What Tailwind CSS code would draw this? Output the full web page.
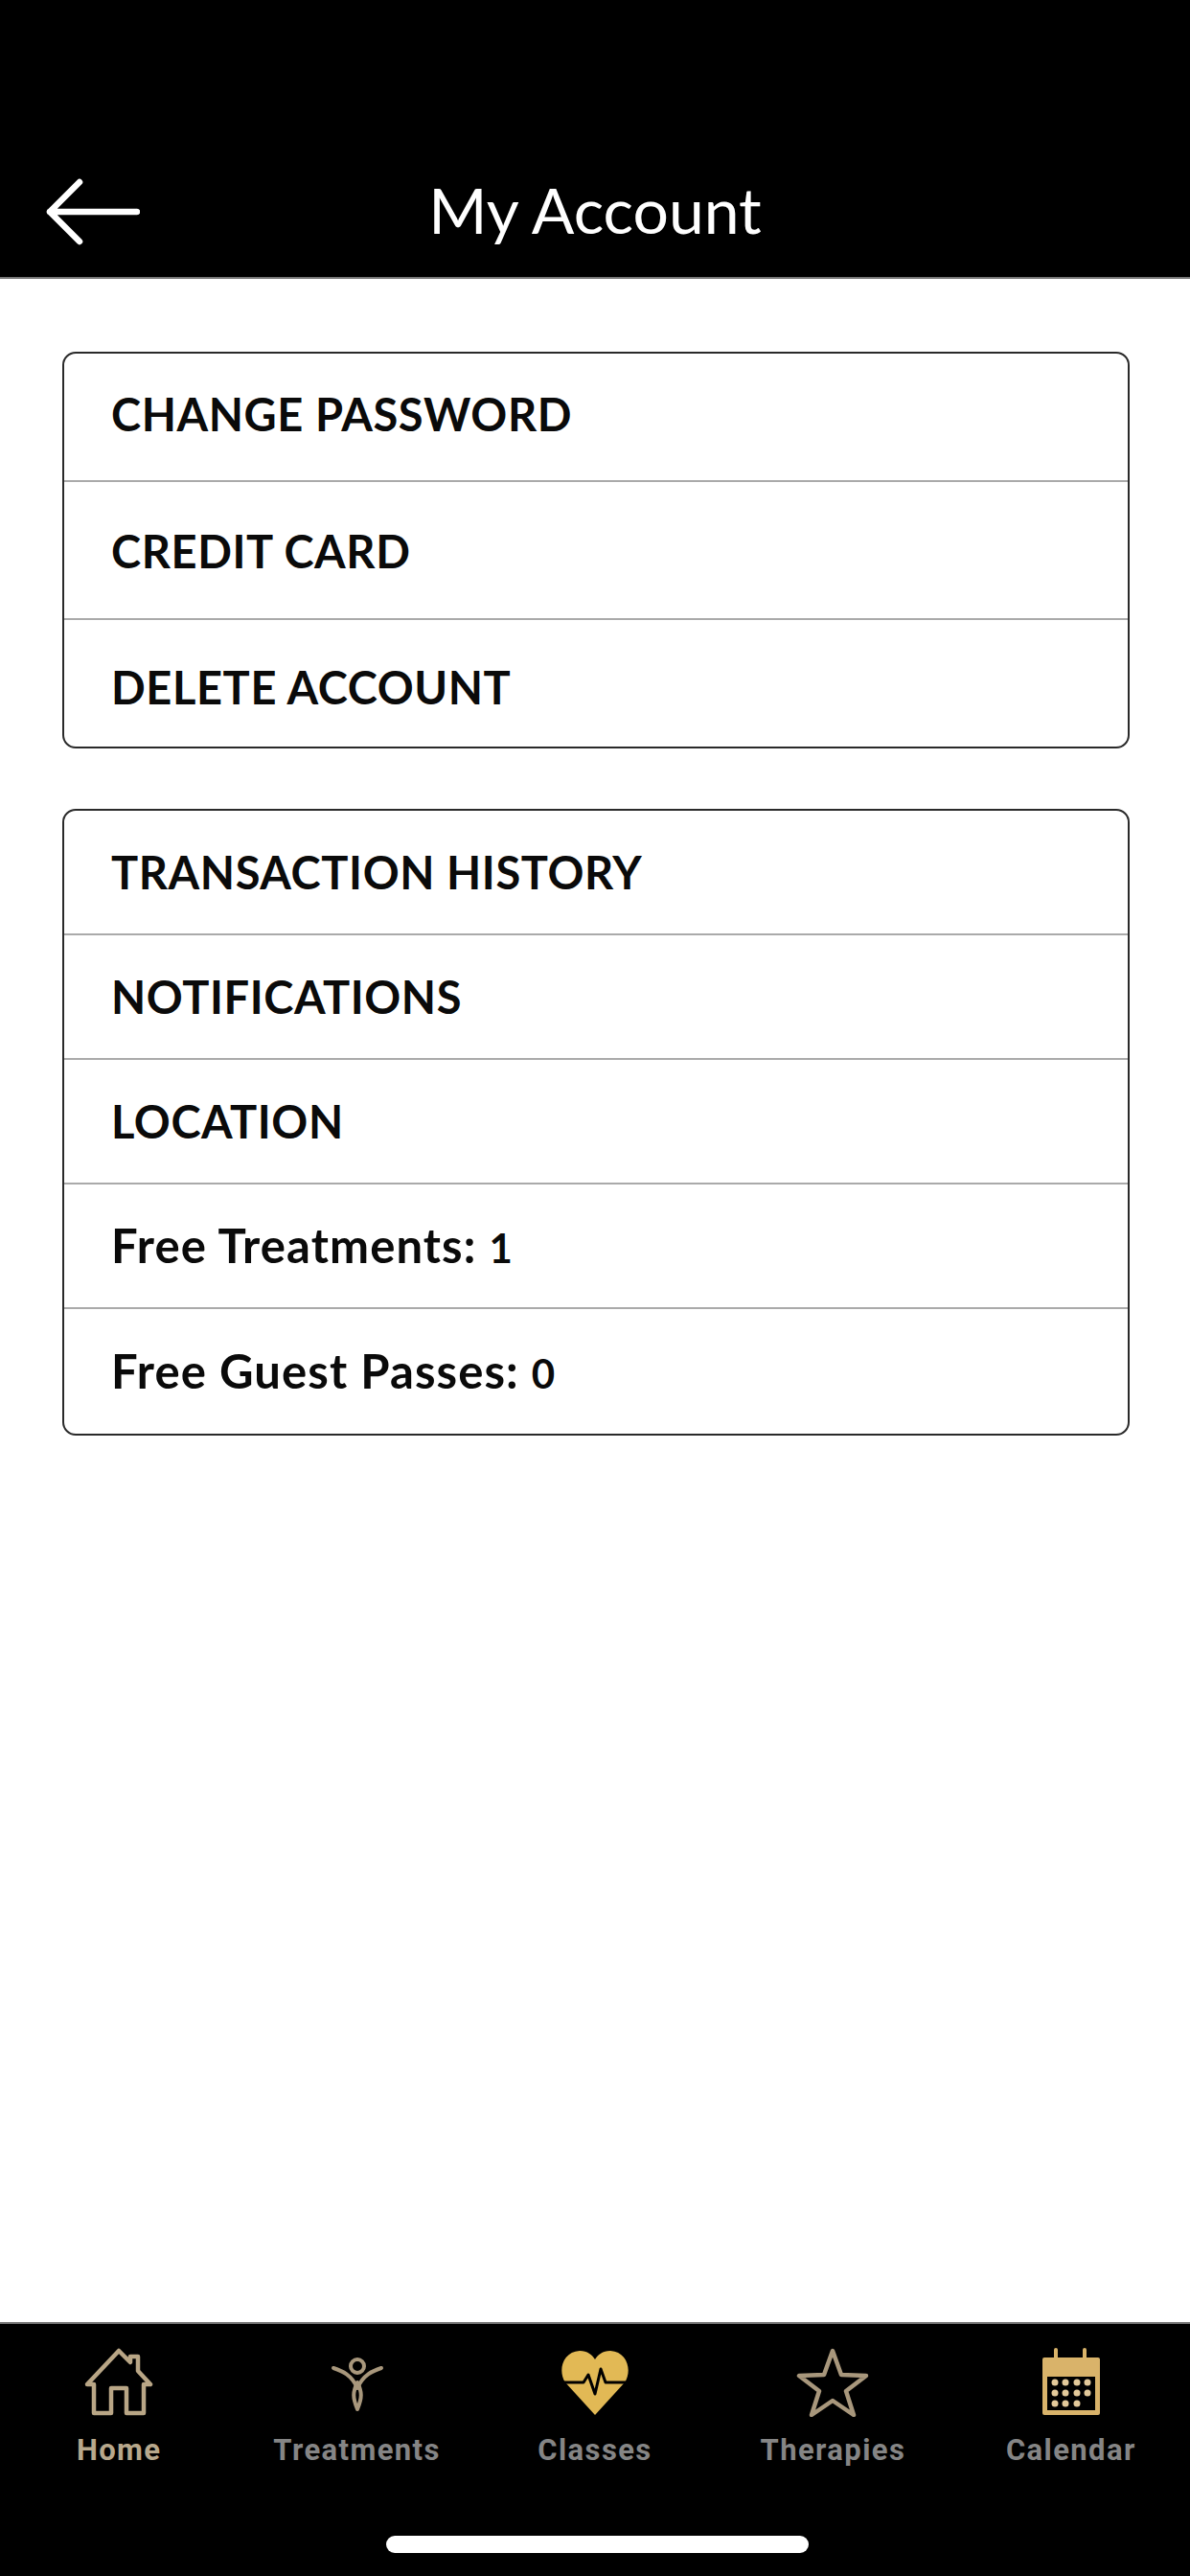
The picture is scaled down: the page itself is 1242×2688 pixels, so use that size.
<!DOCTYPE html>
<html lang="en">
<head>
  <meta charset="UTF-8" />
  <title>My Account</title>
  <script src="https://cdn.jsdelivr.net/npm/@tailwindcss/browser@4"></script>
</head>
<body class="bg-white font-['Lato','Liberation_Sans',sans-serif]">
  <div class="w-[1242px] h-[2688px] flex flex-col overflow-hidden">
    <!-- Header -->
    <header class="h-[291px] bg-black border-b-2 border-[#777] flex items-end pb-[30px] relative shrink-0">
      <svg class="absolute left-[48px] top-[186px] w-[98px] h-[70px]" viewBox="0 0 98 70" fill="none" stroke="#fff" stroke-width="6.5" stroke-linecap="round" stroke-linejoin="round">
        <path d="M35 4 L4 35 L35 66 M4 35 H95"/>
      </svg>
      <h1 class="w-full text-center text-white text-[66px] leading-[80px] font-normal">My Account</h1>
    </header>

    <main class="flex-1 pl-[65px] pr-[63px] pt-[76px] flex flex-col gap-[63px]">
      <!-- Account actions -->
      <div class="border-[2.5px] border-[#2a2a2a] rounded-[14px] text-[#0a0a0a] text-[47px] tracking-[0.6px] font-bold">
        <div class="h-[134px] pl-[49px] pb-[6px] flex items-center border-b-2 border-[#aaa]">CHANGE PASSWORD</div>
        <div class="h-[144px] pl-[49px] pt-[2px] flex items-center border-b-2 border-[#aaa]">CREDIT CARD</div>
        <div class="h-[132px] pl-[49px] pt-[8px] flex items-center">DELETE ACCOUNT</div>
      </div>
      <!-- Other -->
      <div class="border-[2.5px] border-[#2a2a2a] rounded-[14px] text-[#0a0a0a] text-[47px] tracking-[0.6px] font-bold">
        <div class="h-[130px] pl-[49px] flex items-center border-b-2 border-[#aaa]">TRANSACTION HISTORY</div>
        <div class="h-[130px] pl-[49px] flex items-center border-b-2 border-[#aaa]">NOTIFICATIONS</div>
        <div class="h-[130px] pl-[49px] flex items-center border-b-2 border-[#aaa]">LOCATION</div>
        <div class="h-[130px] pl-[49px] flex items-center border-b-2 border-[#aaa] text-[49px] tracking-[1.1px]"><span>Free Treatments: <span class="text-[42px]">1</span></span></div>
        <div class="h-[130px] pl-[49px] flex items-center text-[49px] tracking-[1.1px]"><span>Free Guest Passes: <span class="text-[42px]">0</span></span></div>
      </div>
    </main>

    <!-- Tab bar -->
    <nav class="h-[265px] bg-black border-t-2 border-[#777] shrink-0 relative">
      <div class="grid grid-cols-5 pt-[25px] text-[31px] leading-[36px] font-bold font-['Roboto',sans-serif] text-[#858585] tracking-[1.4px]">
        <a class="flex flex-col items-center text-[#b8a88c]">
          <svg class="w-[72px] h-[72px] mb-[17px]" viewBox="0 0 72 72" fill="none" stroke="#b9a686" stroke-width="4.5" stroke-linejoin="round" stroke-linecap="round">
            <path d="M3 38 L36 3 L48 15 V9 H56 V24 L69 38 L62 38 V68 H44 V42 H28 V68 H10 V38 Z"/>
          </svg>
          Home
        </a>
        <a class="flex flex-col items-center">
          <svg class="w-[72px] h-[72px] mb-[17px]" viewBox="0 0 72 72" fill="none" stroke="#a8977c" stroke-width="4" stroke-linecap="round" stroke-linejoin="round">
            <circle cx="36" cy="19" r="7"/>
            <path d="M11 21 C20 24 30 28 36 42 C42 28 52 24 61 21"/>
            <path d="M36 36 C31 46 31 52 36 64 C41 52 41 46 36 36 Z"/>
          </svg>
          Treatments
        </a>
        <a class="flex flex-col items-center">
          <svg class="w-[72px] h-[72px] mb-[17px]" viewBox="0 0 72 72">
            <path fill="#e2b955" d="M36 70 L5 36 C-3 24 2 4 20 3 C28 3 33 7 36 12 C39 7 44 3 52 3 C70 4 75 24 67 36 Z"/>
            <path fill="none" stroke="#000" stroke-width="3" stroke-linejoin="round" d="M2 36 H24 L29 28 L36 48 L42 22 L47 36 H70"/>
          </svg>
          Classes
        </a>
        <a class="flex flex-col items-center">
          <svg class="w-[76px] h-[72px] mb-[17px]" viewBox="0 0 76 72" fill="none" stroke="#a8977c" stroke-width="4.5" stroke-linejoin="round">
            <path d="M38 3 L47 28 L73 29 L52 45 L60 70 L38 55 L16 70 L24 45 L3 29 L29 28 Z"/>
          </svg>
          Therapies
        </a>
        <a class="flex flex-col items-center">
          <svg class="w-[64px] h-[72px] mb-[17px]" viewBox="0 0 64 72">
            <rect x="2" y="10" width="60" height="60" rx="2" fill="#d9b36a"/>
            <rect x="7" y="30" width="50" height="35" fill="#000"/>
            <path d="M16 2 V18 M46 2 V18" stroke="#d9b36a" stroke-width="4" stroke-linecap="round"/>
            <g fill="#e3c99a">
              <circle cx="15" cy="36" r="3.5"/><circle cx="26" cy="36" r="3.5"/><circle cx="38" cy="36" r="3.5"/><circle cx="49" cy="36" r="3.5"/>
              <circle cx="15" cy="47" r="3.5"/><circle cx="26" cy="47" r="3.5"/><circle cx="38" cy="47" r="3.5"/><circle cx="49" cy="47" r="3.5"/>
              <circle cx="15" cy="58" r="3.5"/><circle cx="26" cy="58" r="3.5"/><circle cx="38" cy="58" r="3.5"/>
            </g>
          </svg>
          Calendar
        </a>
      </div>
      <div class="absolute left-[403px] top-[221px] w-[441px] h-[18px] rounded-full bg-white"></div>
    </nav>
  </div>
</body>
</html>
